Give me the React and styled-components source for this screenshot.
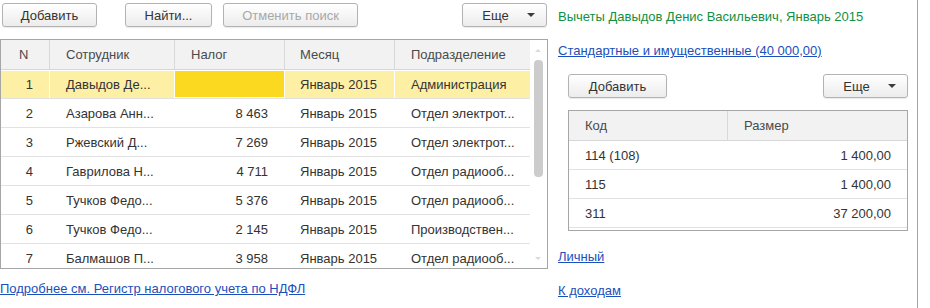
import React from 'react';
import styled, { createGlobalStyle } from 'styled-components';

const GlobalStyle = createGlobalStyle`
	html, body {
		margin: 0;
		padding: 0;
		background: #fff;
	}
	body {
		font-family: Arial, "Liberation Sans", sans-serif;
		font-size: 13px;
		color: #333;
	}
`;

const Page = styled.div`
	display: flex;
	align-items: stretch;
	width: 930px;
	height: 308px;
	overflow: hidden;
`;

const LeftColumn = styled.div`
	display: flex;
	flex-direction: column;
	width: 548px;
	flex-shrink: 0;
`;

const RightColumn = styled.div`
	display: flex;
	flex-direction: column;
	width: 360px;
	margin-left: 10px;
	border-right: 1px solid #a6a6a6;
	box-sizing: border-box;
	padding-right: 9px;
`;

const Toolbar = styled.div`
	display: flex;
	align-items: center;
	flex-shrink: 0;
	padding: ${p => p.$pad || '3px 1px 0 2px'};
`;

const Button = styled.button`
	display: flex;
	align-items: center;
	justify-content: center;
	box-sizing: border-box;
	width: ${p => p.$w}px;
	height: 24px;
	margin-left: ${p => p.$ml || 0}px;
	padding: 0;
	border: 1px solid #b3b3b3;
	border-radius: 3px;
	background: linear-gradient(#ffffff, #ececec);
	box-shadow: 0 1px 1px rgba(0, 0, 0, 0.08);
	font-family: Arial, "Liberation Sans", sans-serif;
	font-size: 13px;
	color: ${p => (p.disabled ? '#a8a8a8' : '#333')};
`;

const MoreButton = styled(Button)`
	justify-content: space-between;
	padding: 0 11px 0 15px;
	margin-left: auto;
	span {
		flex: 1;
		text-align: center;
		padding-right: 14px;
	}
`;

const Caret = styled.i`
	width: 0;
	height: 0;
	border-left: 4px solid transparent;
	border-right: 4px solid transparent;
	border-top: 4px solid #3d3d3d;
`;

const Grid = styled.div`
	display: flex;
	flex-shrink: 0;
	box-sizing: border-box;
	height: ${p => p.$h}px;
	margin: ${p => p.$m || '12px 0 0 0'};
	border: 1px solid #a6a6a6;
	overflow: hidden;
`;

const GridBody = styled.div`
	flex: 1;
	display: flex;
	flex-direction: column;
	overflow: hidden;
`;

const HeadRow = styled.div`
	display: grid;
	grid-template-columns: ${p => p.$cols};
	height: 30px;
	flex-shrink: 0;
	box-sizing: border-box;
	background: #f2f2f2;
	border-bottom: 1px solid #d6d6d6;
`;

const HeadCell = styled.div`
	display: flex;
	align-items: center;
	padding-left: ${p => p.$pl || 16}px;
	border-right: 1px solid #d9d9d9;
	color: #4a4a4a;
	&:last-child {
		border-right: none;
	}
`;

const Row = styled.div`
	display: grid;
	grid-template-columns: ${p => p.$cols};
	height: 29px;
	flex-shrink: 0;
	box-sizing: border-box;
	border-bottom: 1px solid #e2e2e2;
	background: ${p => (p.$selected ? '#fdf0a5' : '#fff')};
	box-shadow: inset 0 1px 0 #fff;
`;

const Cell = styled.div`
	display: flex;
	align-items: center;
	justify-content: ${p => (p.$right ? 'flex-end' : 'flex-start')};
	padding: ${p => (p.$right ? `0 ${p.$pr || 16}px 0 0` : `0 0 0 ${p.$pl || 16}px`)};
	border-right: 1px solid #fff;
	background: ${p => (p.$current ? '#fad920' : 'transparent')};
	box-shadow: ${p => (p.$current ? 'inset 0 1px 0 #fff, inset 0 -1px 0 #fff' : 'none')};
	white-space: nowrap;
	overflow: hidden;
	color: #333;
	&:last-child {
		border-right: none;
	}
`;

const ScrollTrack = styled.div`
	position: relative;
	width: 17px;
	flex-shrink: 0;
	background: #fff;
`;

const ScrollArrow = styled.i`
	position: absolute;
	left: 5px;
	width: 0;
	height: 0;
	border-left: 3px solid transparent;
	border-right: 3px solid transparent;
	${p => (p.$down ? 'bottom: 8px; border-top: 3px solid #dadada;' : 'top: 9px; border-bottom: 3px solid #dadada;')}
`;

const ScrollThumb = styled.div`
	position: absolute;
	left: 4px;
	top: 20px;
	width: 9px;
	height: 117px;
	border-radius: 4px;
	background: #cccccc;
`;

const Link = styled.a`
	display: block;
	flex-shrink: 0;
	margin-top: ${p => p.$mt}px;
	line-height: 16px;
	color: #1b4fbb;
	text-decoration: underline;
	cursor: pointer;
	align-self: flex-start;
`;

const Title = styled.div`
	margin-top: 9px;
	line-height: 16px;
	color: #109043;
	white-space: nowrap;
`;

const mainCols = '49px 125px 110px 110px 1fr';
const sideCols = '159px 1fr';

const rows = [
	['1', 'Давыдов Де...', '', 'Январь 2015', 'Администрация'],
	['2', 'Азарова Анн...', '8 463', 'Январь 2015', 'Отдел электрот...'],
	['3', 'Ржевский Д...', '7 269', 'Январь 2015', 'Отдел электрот...'],
	['4', 'Гаврилова Н...', '4 711', 'Январь 2015', 'Отдел радиооб...'],
	['5', 'Тучков Федо...', '5 376', 'Январь 2015', 'Отдел радиооб...'],
	['6', 'Тучков Федо...', '2 145', 'Январь 2015', 'Производствен...'],
	['7', 'Балмашов П...', '3 958', 'Январь 2015', 'Отдел радиооб...'],
];

const deductions = [
	['114 (108)', '1 400,00'],
	['115', '1 400,00'],
	['311', '37 200,00'],
];

const App = () => {
	return (
		<>
			<GlobalStyle />
			<Page>
				<LeftColumn>
					<Toolbar>
						<Button $w={95}>Добавить</Button>
						<Button $w={87} $ml={28}>Найти...</Button>
						<Button $w={135} $ml={11} disabled>Отменить поиск</Button>
						<MoreButton $w={85}>
							<span>Еще</span>
							<Caret />
						</MoreButton>
					</Toolbar>
					<Grid $h={230}>
						<GridBody>
							<HeadRow $cols={mainCols}>
								<HeadCell $pl={18}>N</HeadCell>
								<HeadCell>Сотрудник</HeadCell>
								<HeadCell>Налог</HeadCell>
								<HeadCell $pl={15}>Месяц</HeadCell>
								<HeadCell>Подразделение</HeadCell>
							</HeadRow>
							{rows.map((r, i) => (
								<Row key={r[0]} $cols={mainCols} $selected={i === 0}>
									<Cell $right $pr={16}>{r[0]}</Cell>
									<Cell>{r[1]}</Cell>
									<Cell $right $current={i === 0}>{r[2]}</Cell>
									<Cell $pl={15}>{r[3]}</Cell>
									<Cell>{r[4]}</Cell>
								</Row>
							))}
						</GridBody>
						<ScrollTrack>
							<ScrollArrow />
							<ScrollThumb />
							<ScrollArrow $down />
						</ScrollTrack>
					</Grid>
					<Link $mt={12}>Подробнее см. Регистр налогового учета по НДФЛ</Link>
				</LeftColumn>
				<RightColumn>
					<Title>Вычеты Давыдов Денис Васильевич, Январь 2015</Title>
					<Link $mt={18}>Стандартные и имущественные (40 000,00)</Link>
					<Toolbar $pad="15px 0 0 10px">
						<Button $w={99}>Добавить</Button>
						<MoreButton $w={85}>
							<span>Еще</span>
							<Caret />
						</MoreButton>
					</Toolbar>
					<Grid $h={121} $m="12px 0 0 10px">
						<GridBody>
							<HeadRow $cols={sideCols}>
								<HeadCell>Код</HeadCell>
								<HeadCell>Размер</HeadCell>
							</HeadRow>
							{deductions.map(d => (
								<Row key={d[0]} $cols={sideCols}>
									<Cell>{d[0]}</Cell>
									<Cell $right>{d[1]}</Cell>
								</Row>
							))}
						</GridBody>
					</Grid>
					<Link $mt={18}>Личный</Link>
					<Link $mt={18}>К доходам</Link>
				</RightColumn>
			</Page>
		</>
	);
};

export default App;
